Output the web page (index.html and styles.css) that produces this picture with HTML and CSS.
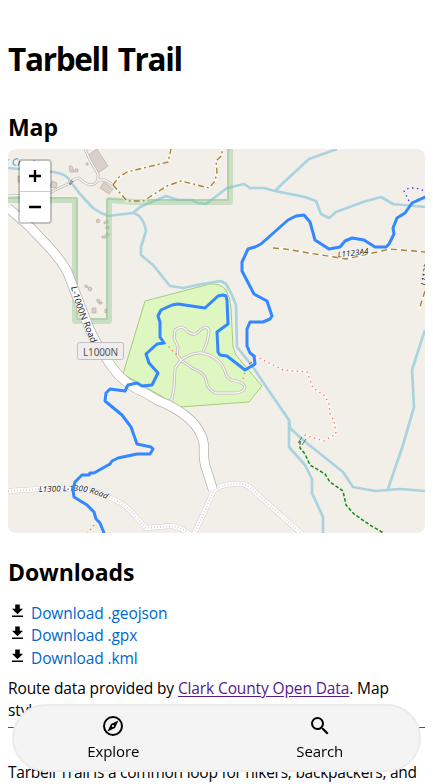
FILE: index.html
```html
<!DOCTYPE html>
<html lang="en">
<head>
<meta charset="utf-8">
<meta name="viewport" content="width=device-width, initial-scale=1">
<title>Tarbell Trail</title>
<link rel="stylesheet" href="styles.css">
</head>
<body>
<main>
  <h1>Tarbell Trail</h1>
  <h2>Map</h2>
  <div class="map">
    <svg class="tiles" viewBox="8 149 417 384" fill="none" stroke-linejoin="round">
      <defs>
        <path id="road" d="M8 208L30 227L48 246Q60 259 67 271L77 297L88 325Q94 341 112 367Q124 384 145 393L157 400Q200 417 204 445Q203 462 207 471L213 490"/>
        <g id="tracks">
          <path d="M8 491L40 489H75Q98 490 115 500Q128 506 136 517L146 528L170 526Q179 526 190 534"/>
          <path d="M194 534L203 515L214 490L221 486Q232 483 243 484Q250 486 257 494L302 534"/>
        </g>
        <g id="lanes">
          <path d="M168 404L172 398L174 388L175 368L181 360Q192 352 202 353Q220 357 225 371Q226 377 231 380Q244 382 245 387Q244 392 236 393H215Q207 389 206 380Q205 373 192 368L181 360L177 355L178 347L174 338L175 330Q182 324 187 331Q195 338 200 330Q208 324 209 332L207 342L203 352"/>
          <path d="M172 398V406"/>
          <path d="M85 149L90 160L98 174Q99 181 94 184Q88 187 79 178Q75 178 68 184L49 193L37 195L8 196M98 180L105 180L113 185"/>
        </g>
        <path id="road-label" d="M71 287Q75 306 83 323L92 345"/>
        <path id="track-label" d="M39 492L75 491Q91 491 110 501"/>
      </defs>
      <path class="park" d="M123 374L145 301L210 284Q220 283 226 290Q231 299 231 308L233 347L236 355L262 386L249 402L180 407Z"/>
      <g class="building">
        <path d="M87 156L97 149L108 166L98 173Z"/>
        <path d="M104 182L113 189L109 194L100 188Z"/>
        <path d="M52 181L57 183L56 188L50 187ZM69 166L72 166L74 172L70 172ZM75 169h3v3h-3zM86 163h2v2h-2zM18 176l3 1v6l-3-1z"/>
        <path d="M97 219l3 1-1 3-3-1zM104 222l4-2v3l-4 1zM106 226h3v3h-3zM106 233h3v3h-3zM102 236h4v2h-4zM85 285l3 1v2l-3-1zM89 287l3 1-1 3-3-1zM97 299l3 1v3l-3-1zM99 302h3v2h-3zM92 308h4v5h-4zM105 309h2v4h-2z"/>
      </g>
      <g class="water">
        <path d="M8 168L54 172Q67 174 70 181L80 194L93 208Q100 213 108 216L133 213L140 207L166 196L178 200H192L198 203L206 204L227 188L244 184L250 188H264L275 191L305 197L316 201L321 214L329 218L336 212L363 202L381 197L393 204L425 207"/>
        <path d="M275 191L283 183L309 159L337 149"/>
        <path d="M133 213Q143 215 146 231L141 247V255L153 265L170 286L183 288L202 284L221 281L226 284L231 293L236 305L237 347L253 367L267 388L289 420L290 428L303 440L343 472L353 487L375 491L400 489L425 491"/>
        <path d="M289 420V447L305 465L312 479V493L323 517V533"/>
        <path d="M425 330L412 370L414 407L403 445L388 489"/>
      </g>
      <g class="boundary">
        <path class="boundary-band" d="M8 200H75V321H109V200L135 202H230V149"/>
        <path class="boundary-edge" d="M8 198H77V319H107V199L135 200H228V149"/>
      </g>
      <use href="#lanes" class="lane-case"/><use href="#lanes" class="lane-fill"/>
      <path class="bridge" d="M69 184l3-4m-2 5l3-4"/>
      <use href="#tracks" class="track-case"/><use href="#tracks" class="track-fill"/><use href="#tracks" class="track-dots"/>
      <use href="#road" class="road-case"/><use href="#road" class="road-fill"/>
      <g class="path-halo">
        <path d="M113 185L119 177L127 172L168 162L171 149M113 185L127 201L143 201L148 198L167 186L181 181L209 188L215 181L217 172L216 161L222 155V149M273 248L285 249L309 253L346 259L390 249L425 252M425 291L419 310"/>
        <path d="M255 356L283 370L307 372L313 388L325 396L329 404L330 414L334 421L336 434L324 441L304 435"/>
      </g>
      <path class="brown-path" d="M113 185L119 177L127 172L168 162L171 149M113 185L127 201L143 201L148 198L167 186L181 181L209 188L215 181L217 172L216 161L222 155V149"/>
      <path class="brown-track" d="M273 248L285 249L309 253L346 259L390 249L425 252M425 291L419 310"/>
      <path class="foot" d="M255 356L283 370L307 372L313 388L325 396L329 404L330 414L334 421L336 434L324 441L304 435M165 343L178 356M246 368L242 382M94 525L86 535"/>
      <path class="cycle" d="M300 441V448L305 454L310 465L325 474L330 482L343 491L346 505L354 514L370 525L385 534"/>
      <path class="bridle" d="M409 201L404 191L409 188H416L425 191"/>
      <path class="bridge" d="M298 443l4-6m0 8l4-6M249 364l3-2m-2 5l4-3"/>
      <g class="label">
        <text><textPath href="#road-label" textLength="60" lengthAdjust="spacingAndGlyphs">L-1000N Road</textPath></text>
        <text class="italic"><textPath href="#track-label" textLength="69" lengthAdjust="spacingAndGlyphs">L1300 L-1300 Road</textPath></text>
        <text class="italic" transform="translate(338 257.500) rotate(-7)" textLength="31" lengthAdjust="spacingAndGlyphs">L1123A4</text>
        <text class="italic" transform="translate(426 286) rotate(-80)">L1123</text>
        <text class="creek" transform="translate(4 164) rotate(7)">k Creek</text>
      </g>
      <rect class="shield" x="77.500" y="342.500" width="46" height="17" rx="2"/>
      <text class="shield-text" x="83" y="355.500" textLength="35">L1000N</text>
      <path class="trail" d="M425 197L412 203L405 213L397 218L393 228L394 234L389 244L386 247H375L364 240L352 238L345 241L340 247L329 249L315 240L310 222L304 215L296 216L288 220L261 244L255 247L248 249L242 262V271L254 294L267 301L272 316L270 319L263 322H250L247 329V346L250 353L254 356L255 364L245 370L227 356L220 355L218 352L217 332L228 324L227 300L226 296L223 295L218 296L205 308L178 304L172 305L161 310L158 316L160 322V337L164 343L157 344L146 354L149 363L158 373L152 385L142 386L137 383L128 385L125 391L110 389L106 393L105 401L122 415L131 427L137 444L151 447L153 449L150 454H137L118 458L112 461L110 464L94 473L90 473L89 475H82L75 482L73 490L74 497L87 505L94 512L96 519L100 523L104 533"/>
    </svg>
    <div class="zoom-control"><button aria-label="Zoom in"><svg viewBox="0 0 12 12"><path d="M0 6H12M6 0V12"/></svg></button><button aria-label="Zoom out"><svg viewBox="0 0 12 12"><path d="M0 6H12"/></svg></button></div>
  </div>
  <h2>Downloads</h2>
  <ul class="downloads">
    <li><svg viewBox="0 0 12 14"><path d="M3.500 0h5v4.500H12L6 10.500 0 4.500h3.500zM0 12h12v1.600H0z"/></svg><a href="#">Download .geojson</a></li>
    <li><svg viewBox="0 0 12 14"><path d="M3.500 0h5v4.500H12L6 10.500 0 4.500h3.500zM0 12h12v1.600H0z"/></svg><a href="#">Download .gpx</a></li>
    <li><svg viewBox="0 0 12 14"><path d="M3.500 0h5v4.500H12L6 10.500 0 4.500h3.500zM0 12h12v1.600H0z"/></svg><a href="#">Download .kml</a></li>
  </ul>
  <p class="credit">Route data provided by <a href="#">Clark County Open Data</a>. Map<br>style and data provided by OpenStreetMap &amp; Leaflet</p>
  <hr>
  <p class="intro">Tarbell Trail is a common loop for hikers, backpackers, and</p>
</main>
<nav class="tabbar">
  <a href="#"><svg viewBox="0 0 24 24"><path d="M12 2a10 10 0 1 0 0 20 10 10 0 0 0 0-20m0 18a8 8 0 1 1 0-16 8 8 0 0 1 0 16m-5.500-2.500 7.510-3.490L17.500 6.500 9.990 9.990zM12 10.900a1.100 1.100 0 1 1 0 2.200 1.100 1.100 0 0 1 0-2.200"/></svg><span>Explore</span></a>
  <a href="#"><svg viewBox="0 0 24 24"><path d="M15.500 14h-.79l-.28-.27A6.470 6.470 0 0 0 16 9.500 6.500 6.500 0 1 0 9.500 16c1.610 0 3.090-.59 4.230-1.570l.27.28v.79l5 4.990L20.490 19zm-6 0C7.010 14 5 11.990 5 9.500S7.010 5 9.500 5 14 7.010 14 9.500 11.990 14 9.500 14"/></svg><span>Search</span></a>
</nav>
</body>
</html>
```
FILE: styles.css
```css
html { overflow: hidden; }
body {
  margin: 0;
  padding: 0 8px;
  height: 784px;
  overflow: hidden;
  background: #fff;
  color: #000;
  font: 15.5px/21px "Segoe UI", "Open Sans", sans-serif;
}
h1 { margin: 37px 0 31px; font-size: 31.500px; line-height: 43px; letter-spacing: -1.300px; word-spacing: 2.500px; }
h2 { margin: 0; font-size: 23px; line-height: 32px; letter-spacing: -0.100px; padding-bottom: 6px; }
.map { position: relative; height: 384px; margin-bottom: 23px; border-radius: 8px; overflow: hidden; background: #f2efe9; }
.tiles { display: block; width: 100%; height: 100%; }
.park { fill: #def6c0; stroke: #a5cb7d; stroke-width: 1; }
.building { fill: #d9d0c9; stroke: #bfae9f; stroke-width: .7; }
.water { stroke: #aad3df; stroke-width: 2.700; }
.boundary-band { stroke: #8dc58d; stroke-opacity: .4; stroke-width: 6; }
.boundary-edge { stroke: #8dc58d; stroke-opacity: .55; stroke-width: 1.500; }
.lane-case { stroke: #c2bfbc; stroke-width: 3; }
.lane-fill { stroke: #f8f7f5; stroke-width: 1.300; }
.track-case { stroke: #d0cdca; stroke-width: 5.500; }
.track-fill { stroke: #fff; stroke-width: 4.500; }
.track-dots { stroke: #d5d3d0; stroke-width: 2; stroke-dasharray: 1 2; }
.road-case { stroke: #b5b2ae; stroke-width: 10; }
.road-fill { stroke: #fff; stroke-width: 8.500; }
.path-halo { stroke: #fff; stroke-opacity: .55; stroke-width: 3; }
.brown-path { stroke: #ab8133; stroke-width: 1.400; stroke-dasharray: 6 3 2 3; }
.brown-track { stroke: #ab8133; stroke-width: 1.400; stroke-dasharray: 6 4; }
.foot { stroke: #fa8072; stroke-width: 1.400; stroke-dasharray: 1.500 3.500; }
.cycle { stroke: #108a10; stroke-width: 1.500; stroke-dasharray: 3.500 2; }
.bridle { stroke: #3b3bff; stroke-width: 1.300; stroke-dasharray: 1.500 3.500; }
.bridge { stroke: #555; stroke-width: .8; }
.trail { stroke: #3388ff; stroke-width: 3; stroke-linecap: round; }
.label { fill: #222; stroke: #fff; stroke-opacity: .7; stroke-width: 1.500; paint-order: stroke; font: 9px/1 "Noto Sans", sans-serif; }
.label .italic { font-size: 8px; font-style: italic; }
.label .creek { fill: #4d80b3; font-size: 10px; font-style: italic; }
.shield { fill: #efeded; stroke: #c2bfbf; }
.shield-text { fill: #555; font: 10px/1 "Noto Sans", sans-serif; }
.zoom-control { position: absolute; top: 10px; left: 10px; border: 2px solid rgba(0,0,0,.2); border-radius: 4px; background-clip: padding-box; }
.zoom-control button { display: grid; place-items: center; width: 30px; height: 31px; padding: 0; border: 0; border-bottom: 1px solid #ccc; background: #fff; border-radius: 2px 2px 0 0; }
.zoom-control button:last-child { height: 30px; border-bottom: 0; border-radius: 0 0 2px 2px; }
.zoom-control svg { width: 12px; height: 12px; stroke: #000; stroke-width: 2.300; fill: none; }
.downloads { margin: 8px 0 7px; padding: 0; list-style: none; }
.downloads li { display: flex; align-items: center; height: 22.500px; }
.downloads svg { width: 11px; height: 14px; margin: -5px 8px 0 4px; }
.downloads a { color: #06c; text-decoration: none; letter-spacing: -.1px; }
.credit { margin: 0; line-height: 22px; letter-spacing: -.12px; white-space: nowrap; }
.credit a { color: #551a8b; text-underline-offset: 2px; }
hr { margin: 6px 0 34px; border: 0; border-top: 1px solid #555; }
.intro { margin: 0; white-space: nowrap; letter-spacing: -.25px; }
.tabbar { position: fixed; left: 12px; right: 12px; top: 704px; height: 64px; display: grid; grid-template-columns: 1fr 1fr; column-gap: 8px; border: 2px solid #ebebeb; border-radius: 34px; background: #f4f4f4; }
.tabbar a { display: flex; flex-direction: column; align-items: center; color: #000; text-decoration: none; padding-top: 8px; }
.tabbar svg { width: 24px; height: 24px; }
.tabbar span { margin-top: 3px; font-size: 15px; letter-spacing: -.1px; }
```
